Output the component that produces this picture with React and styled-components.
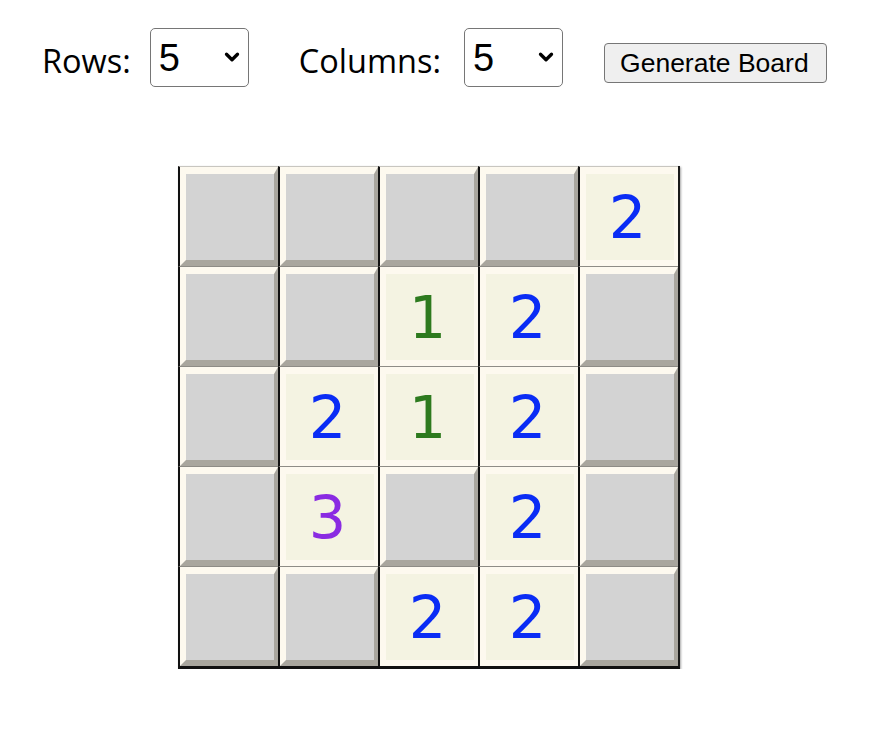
import React from "react";
import styled, { createGlobalStyle } from "styled-components";
import { ChevronDown } from "lucide-react";

const Global = createGlobalStyle`
  body { margin: 8px; background: #fff; font-family: "Open Sans", "Noto Sans", sans-serif; }
`;

const Controls = styled.div`
  display: flex;
  align-items: flex-start;
  padding: 20px 0 0 34px;
  height: 59px;
`;

const Label = styled.label`
  font-family: "Open Sans", "Noto Sans", sans-serif;
  font-size: 32.5px;
  color: #000;
  margin-top: ${(p) => p.$top}px;
  margin-right: ${(p) => p.$right || 19}px;
  margin-left: ${(p) => p.$left || 0}px;
  line-height: 43px;
`;

const SelectWrap = styled.div`
  position: relative;
  width: 99px;
  height: 59px;
`;

const Select = styled.select`
  appearance: none;
  -webkit-appearance: none;
  width: 99px;
  height: 59px;
  box-sizing: border-box;
  border: 1px solid #767676;
  border-radius: 5px;
  background: #fff;
  font-family: "Liberation Sans", Arial, sans-serif;
  font-size: 38px;
  color: #000;
  padding: 0 0 0 8px;
  outline: none;
`;

const Chevron = styled.span`
  position: absolute;
  right: 6px;
  top: 18px;
  pointer-events: none;
  display: flex;
  color: #000;
`;

const Button = styled.button`
  margin-top: 15px;
  margin-left: 41px;
  height: 40px;
  box-sizing: border-box;
  padding: 0 17px 0 15px;
  background: #efefef;
  border: 1px solid #767676;
  border-radius: 4px;
  font-family: "Liberation Sans", Arial, sans-serif;
  font-size: 26.5px;
  color: #000;
`;

const Board = styled.div`
  display: grid;
  grid-template-columns: repeat(5, 100px);
  width: max-content;
  margin: 79px 0 0 170px;
  border-right: 2px solid #1a1a1a;
  border-bottom: 3px solid #111;
  box-shadow: 1px 1px 2px rgba(0, 0, 0, 0.35);
`;

const Cell = styled.div`
  width: 100px;
  height: 100px;
  box-sizing: border-box;
  border-left: 2px solid #111;
  border-top: 1px solid ${(p) => (p.$first ? "#c8c6c0" : "#8e8c86")};
  display: flex;
`;

const Face = styled.div`
  flex: 1;
  box-sizing: border-box;
  border-style: solid;
  border-width: 7px 4px 6px 6px;
  border-color: ${(p) =>
    p.$open ? "#fdf9ef" : "#fdf9ef #a9a69e #a9a69e #fdf9ef"};
  background: ${(p) => (p.$open ? "#f4f3e2" : "#d3d3d3")};
  display: flex;
  align-items: center;
  justify-content: center;
  font-family: "DejaVu Sans", Verdana, sans-serif;
  font-size: 59px;
  line-height: 1;
  color: ${(p) => p.$color};
  padding-right: 5px;
`;

const colors = { 1: "#2d7a1e", 2: "#0a2cf5", 3: "#8a2be2" };

const grid = [
  [0, 0, 0, 0, 2],
  [0, 0, 1, 2, 0],
  [0, 2, 1, 2, 0],
  [0, 3, 0, 2, 0],
  [0, 0, 2, 2, 0],
];

function Dropdown() {
  return (
    <SelectWrap>
      <Select defaultValue="5">
        {[3, 4, 5, 6, 7, 8, 9, 10].map((n) => (
          <option key={n} value={n}>
            {n}
          </option>
        ))}
      </Select>
      <Chevron>
        <ChevronDown size={22} strokeWidth={3.6} />
      </Chevron>
    </SelectWrap>
  );
}

export default function App() {
  return (
    <>
      <Global />
      <Controls>
        <Label $top={11}>Rows:</Label>
        <Dropdown />
        <Label $top={11} $left={50} $right={23}>Columns:</Label>
        <Dropdown />
        <Button>Generate Board</Button>
      </Controls>
      <Board>
        {grid.map((row, r) =>
          row.map((v, c) => (
            <Cell key={`${r}-${c}`} $first={r === 0}>
              <Face $open={v > 0} $color={colors[v]}>
                {v > 0 ? v : ""}
              </Face>
            </Cell>
          ))
        )}
      </Board>
    </>
  );
}
